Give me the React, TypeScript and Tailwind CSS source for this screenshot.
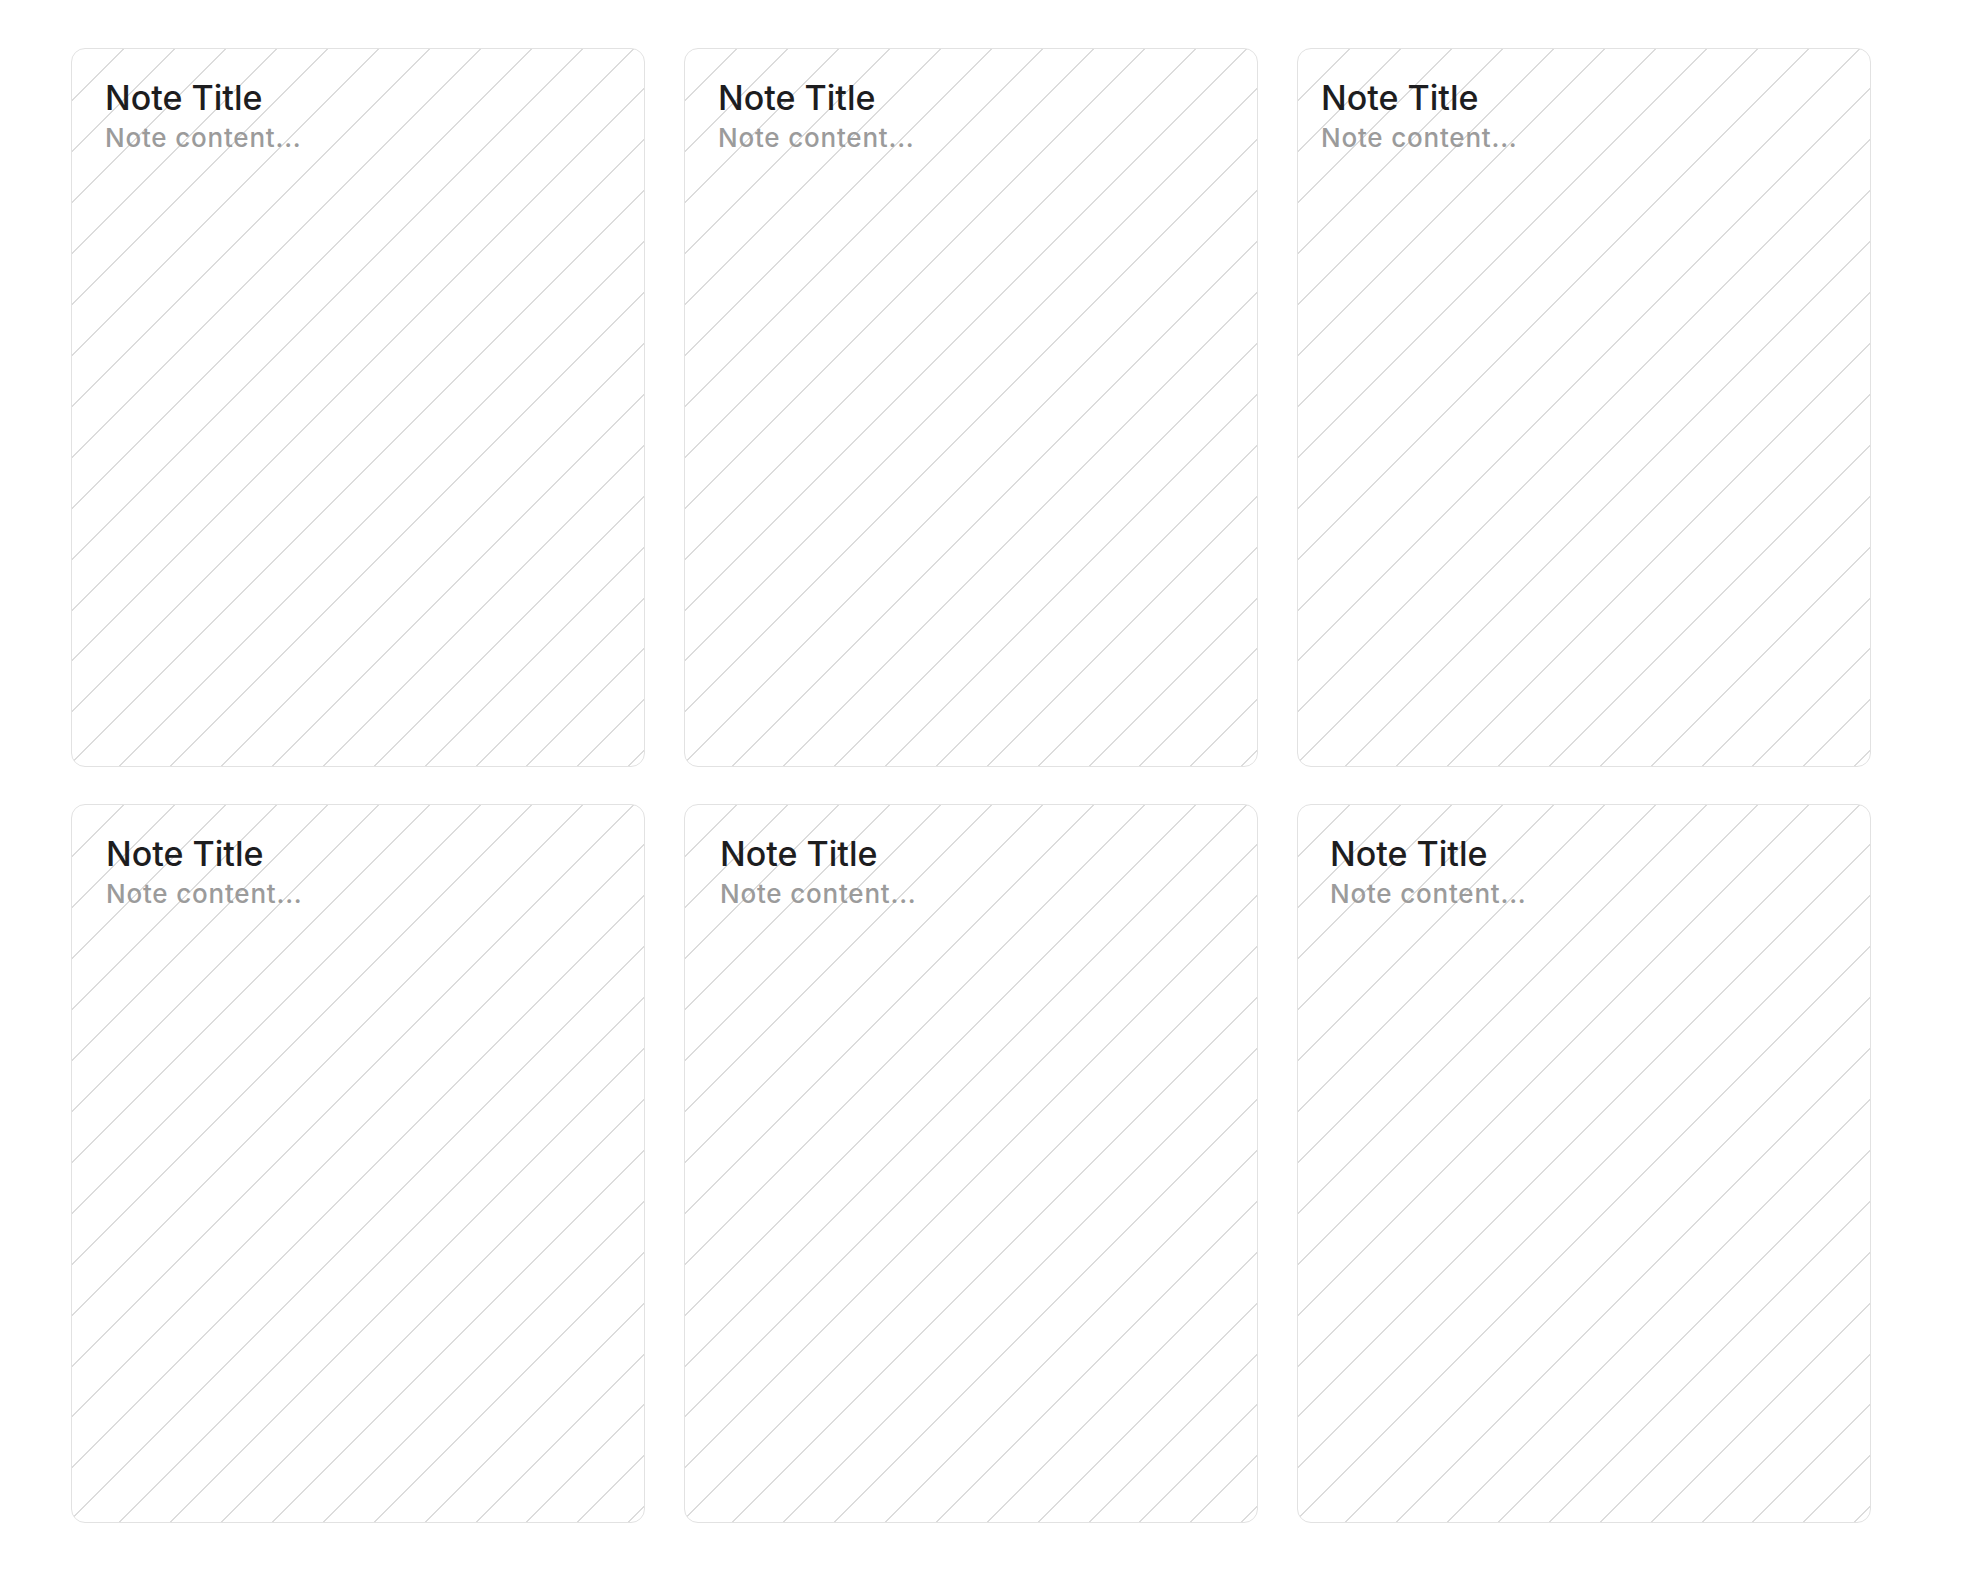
const notes = [
  { id: 1, pad: "pl-[33px]" },
  { id: 2, pad: "pl-[33px]" },
  { id: 3, pad: "pl-[23px]" },
  { id: 4, pad: "pl-[34px]" },
  { id: 5, pad: "pl-[35px]" },
  { id: 6, pad: "pl-[32px]" },
];

function NoteCard({ pad }: { pad: string }) {
  return (
    <div
      className={`h-[719px] rounded-[14px] border border-[#e2e2e2] bg-white bg-[image:repeating-linear-gradient(135deg,#dcdcdc_0px,#dcdcdc_1.4px,transparent_1.4px,transparent_36px)] pt-[28px] ${pad}`}
    >
      <h2 className="text-[34px] leading-[41px] font-medium text-[#1d1d1f]">
        Note Title
      </h2>
      <p className="mt-[2px] text-[26px] leading-[36px] font-medium tracking-[0.8px] text-[#9b9b9b]">
        Note content...
      </p>
    </div>
  );
}

export default function App() {
  return (
    <div className="min-h-[1588px] bg-white pl-[71px] pt-[48px] font-['Inter','Liberation_Sans',sans-serif]">
      <div className="grid grid-cols-[repeat(3,574px)] gap-x-[39px] gap-y-[37px]">
        {notes.map((n) => (
          <NoteCard key={n.id} pad={n.pad} />
        ))}
      </div>
    </div>
  );
}
